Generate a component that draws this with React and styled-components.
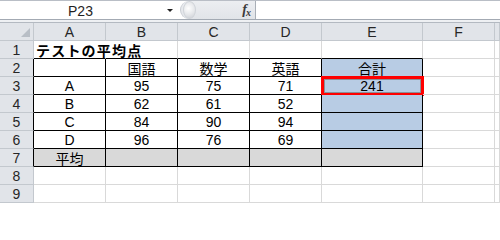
import React from "react";
import styled, { createGlobalStyle, css } from "styled-components";

const Global = createGlobalStyle`
  html, body { margin: 0; padding: 0; background: #ffffff; }
  body { font-family: "Liberation Sans", "Noto Sans CJK JP", sans-serif; }
`;

const Window = styled.div`
  width: 500px;
  height: 203px;
  overflow: hidden;
  background: #ffffff;
  display: flex;
  flex-direction: column;
`;

const FormulaBar = styled.div`
  height: 22px;
  box-sizing: border-box;
  border-top: 1px solid #b9bec6;
  border-bottom: 1px solid #a3aab3;
  display: flex;
  background: #ffffff;
`;

const NameBox = styled.div`
  width: 180px;
  display: flex;
  align-items: center;
  background: #ffffff;
`;

const NameText = styled.div`
  width: 161px;
  text-align: center;
  font-size: 14px;
  color: #1f1f1f;
  padding-top: 1px;
`;

const DropArrow = styled.div`
  width: 0;
  height: 0;
  border-left: 3px solid transparent;
  border-right: 3px solid transparent;
  border-top: 3px solid #222;
  margin-left: 6px;
  margin-top: 1px;
`;

const FxPanel = styled.div`
  width: 75px;
  display: flex;
  align-items: center;
  justify-content: space-between;
  background: linear-gradient(#eceef1, #e1e4e8);
  border-radius: 10px 0 0 10px;
  border-left: 1px solid #c9cdd3;
  padding: 0 5px 0 2px;
  box-sizing: border-box;
`;

const Dimple = styled.div`
  width: 11px;
  height: 16px;
  border-radius: 50%;
  background: radial-gradient(circle at 40% 40%, #ffffff 0%, #e4e6e9 55%, #c9cdd2 100%);
  border: 1px solid #d0d4d9;
`;

const FxLabel = styled.div`
  font-family: "Liberation Serif", serif;
  font-style: italic;
  font-weight: bold;
  font-size: 14px;
  color: #3a3a3a;
  letter-spacing: -1px;
  & span { font-size: 10px; position: relative; top: 2px; }
`;

const FormulaInput = styled.div`
  flex: 1;
  background: #ffffff;
  border-left: 1px solid #a9afb7;
`;

const Band = styled.div`
  height: 3px;
  background: #eef0f3;
  border-bottom: 1px solid #b3b9c1;
`;

const Grid = styled.div`
  display: grid;
  grid-template-columns: 34px 72px 72px 72px 72px 101px 72px 1fr;
  grid-auto-rows: 18px;
`;

const HeaderCell = styled.div`
  box-sizing: border-box;
  background: #e1e4e9;
  border-right: 1px solid ${(p) => (p.$black ? "#000000" : "#c3c8ce")};
  border-bottom: 1px solid #c3c8ce;
  display: flex;
  align-items: center;
  justify-content: center;
  font-size: 14px;
  color: #262626;
  position: relative;
`;

const Corner = styled(HeaderCell)`
  &::after {
    content: "";
    position: absolute;
    right: 3px;
    bottom: 3px;
    width: 0;
    height: 0;
    border-left: 9px solid transparent;
    border-bottom: 9px solid #b8bec6;
  }
`;

const Cell = styled.div`
  box-sizing: border-box;
  position: relative;
  background: ${(p) => p.$fill || "transparent"};
  border-right: 1px solid ${(p) => p.$right};
  border-bottom: 1px solid ${(p) => p.$bottom};
  display: flex;
  align-items: center;
  justify-content: center;
  font-size: 14px;
  color: #000000;
  white-space: nowrap;
  ${(p) =>
    p.$title &&
    css`
      justify-content: flex-start;
      padding-left: 2px;
      overflow: visible;
      z-index: 1;
    `}
`;

const Title = styled.span`
  font-family: "Noto Sans CJK JP", sans-serif;
  font-weight: bold;
  font-size: 14px;
  letter-spacing: 1.2px;
`;

const Jp = styled.span`
  font-family: "Noto Sans CJK JP", sans-serif;
  font-size: 14px;
`;

const Selection = styled.div`
  position: absolute;
  left: -1px;
  top: -1px;
  right: -2px;
  bottom: -2px;
  border: 3px solid #ff0000;
  box-shadow: inset 0 0 0 1px #8c8f96;
  pointer-events: none;
`;

const COLS = ["A", "B", "C", "D", "E", "F", "G"];

const DATA = {
  2: ["", "国語", "数学", "英語", "合計", "", ""],
  3: ["A", "95", "75", "71", "241", "", ""],
  4: ["B", "62", "61", "52", "", "", ""],
  5: ["C", "84", "90", "94", "", "", ""],
  6: ["D", "96", "76", "69", "", "", ""],
  7: ["平均", "", "", "", "", "", ""],
};

const GRID = "#d9d9d9";
const BLACK = "#000000";
const BLUE = "#b8cce4";
const GRAY = "#d9d9d9";

const isJp = (s) => /[^\x00-\x7f]/.test(s);

export default function App() {
  const rows = [1, 2, 3, 4, 5, 6, 7, 8, 9];
  return (
    <Window>
      <Global />
      <FormulaBar>
        <NameBox>
          <NameText>P23</NameText>
          <DropArrow />
        </NameBox>
        <FxPanel>
          <Dimple />
          <FxLabel>
            f<span>x</span>
          </FxLabel>
        </FxPanel>
        <FormulaInput />
      </FormulaBar>
      <Band />
      <Grid>
        <Corner />
        {COLS.map((c) => (
          <HeaderCell key={c}>{c === "G" ? "" : c}</HeaderCell>
        ))}
        {rows.map((r) => (
          <React.Fragment key={r}>
            <HeaderCell $black={r >= 2 && r <= 7}>{r}</HeaderCell>
            {COLS.map((c, ci) => {
              const inTable = r >= 2 && r <= 7 && ci <= 4;
              const right = inTable ? BLACK : r === 1 && ci === 0 ? "transparent" : GRID;
              const bottom = (r >= 1 && r <= 7 && ci <= 4) ? BLACK : GRID;
              let fill;
              if (r >= 2 && r <= 6 && ci === 4) fill = BLUE;
              if (r === 7 && ci <= 4) fill = GRAY;
              const val = DATA[r] ? DATA[r][ci] : "";
              const isTitle = r === 1 && ci === 0;
              return (
                <Cell key={c} $right={right} $bottom={bottom} $fill={fill} $title={isTitle}>
                  {isTitle ? (
                    <Title>テストの平均点</Title>
                  ) : val && isJp(val) ? (
                    <Jp>{val}</Jp>
                  ) : (
                    val
                  )}
                  {r === 3 && ci === 4 && <Selection />}
                </Cell>
              );
            })}
          </React.Fragment>
        ))}
      </Grid>
    </Window>
  );
}
